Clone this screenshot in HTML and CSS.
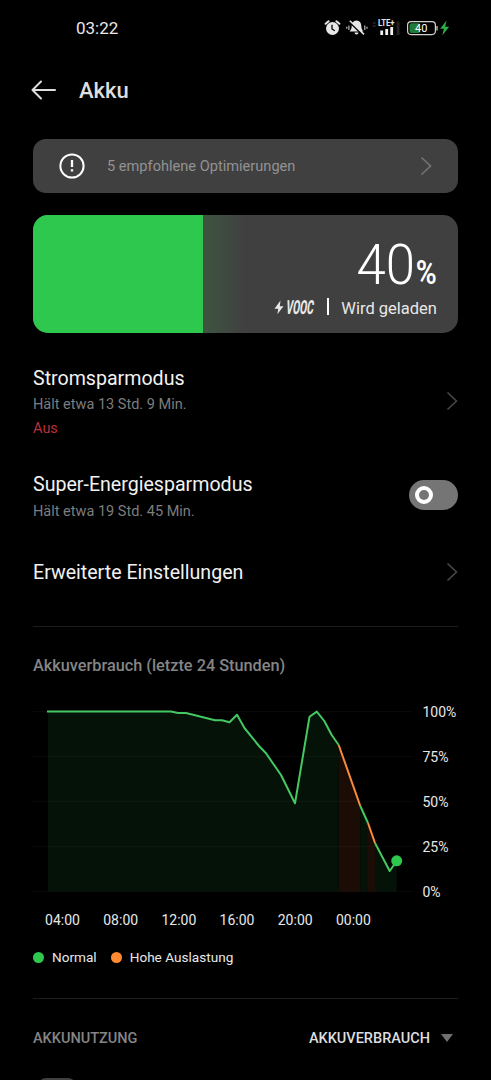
FILE: index.html
```
<!DOCTYPE html>
<html lang="de">
<head>
    <meta charset="UTF-8">
    <meta name="viewport" content="width=device-width, initial-scale=1.0">
    <title>Akku</title>
    <link rel="stylesheet" href="styles.css">
</head>
<body>

    <!-- Status Bar -->
    <div class="status-bar">
        <span class="clock">03:22</span>
        <svg class="status-icons" width="130" height="20" viewBox="0 0 130 20">
            <!-- Alarm -->
            <circle cx="12.5" cy="10.5" r="6.5" fill="#e6e6e6"/>
            <path d="M5.6 5.800L8.600 3.200M19.400 5.800L16.400 3.200" stroke="#e6e6e6" stroke-width="2" stroke-linecap="round"/>
            <path d="M12 6.800V11L14.800 12.800" stroke="#000" stroke-width="1.300" fill="none"/>
            <!-- Muted bell -->
            <path d="M36.500 2.500c-3.400 0.400-4.800 2.600-4.800 5.400 0 3-1 4-2.200 5.600h14c-1.200-1.600-2.200-2.600-2.200-5.600 0-2.800-1.400-5-4.800-5.400zM34.500 14.500h4a2 1.900 0 0 1-4 0z" fill="#e6e6e6"/>
            <path d="M30 4.400L43 17" stroke="#000" stroke-width="2"/>
            <path d="M29.800 2.800L44 16.400" stroke="#e6e6e6" stroke-width="1.500"/>
            <path d="M28.900 7.500v4.500M26.800 8.800v2M44.800 7.500v4.500M47 8.800v2" stroke="#c8c8c8" stroke-width="1.100"/>
            <!-- Mobile signal -->
            <path d="M53 5h2.500M53 8h2.500" stroke="#444" stroke-width="1.200"/>
            <text class="lte" x="58" y="8" textLength="16.500" lengthAdjust="spacingAndGlyphs">LTE+</text>
            <path d="M61.700 12.500v4.500M66.700 11v6M71.700 9v8" stroke="#f0f0f0" stroke-width="2.800"/>
            <path d="M78 3.500v13.500" stroke="#222" stroke-width="3"/>
            <!-- Battery -->
            <rect x="87.600" y="3.600" width="27.800" height="13" rx="3.500" fill="none" stroke="#d0d0d0" stroke-width="1.200"/>
            <path d="M91.500 5.300h8v9.600h-8a2 2 0 0 1-2-2v-5.600a2 2 0 0 1 2-2z" fill="#1e7c39"/>
            <path d="M117 8v4.500" stroke="#bbb" stroke-width="1.400"/>
            <text class="battery-level" x="101.300" y="14.100" text-anchor="middle">40</text>
            <path d="M126.500 2.600l-6.300 8.200h3.700l-1.600 6.800 6.800-8.800h-3.900z" fill="#2cb04a"/>
        </svg>
    </div>

    <!-- Page Header -->
    <header>
        <svg class="back-arrow" width="26" height="20" viewBox="0 0 26 20">
            <path d="M10 1.500L1.500 10L10 18.500M1.500 10H24" fill="none" stroke="#dedede" stroke-width="2" stroke-linecap="round" stroke-linejoin="round"/>
        </svg>
        <h1>Akku</h1>
    </header>

    <!-- Recommendation Banner -->
    <div class="tips">
        <svg width="26" height="26" viewBox="0 0 26 26">
            <circle cx="13" cy="13" r="11.600" fill="none" stroke="#fff" stroke-width="2"/>
            <path d="M13 7v7M13 16.200v2.400" stroke="#fff" stroke-width="2.300"/>
        </svg>
        <span class="tips-text">5 empfohlene Optimierungen</span>
        <svg class="chevron" width="12" height="20" viewBox="0 0 12 20">
            <path d="M1.500 1.500L10.500 10L1.500 18.500" fill="none" stroke="#747474" stroke-width="1.600"/>
        </svg>
    </div>

    <!-- Battery Card -->
    <div class="battery-card">
        <div class="battery-fill"></div>
        <div class="battery-glow"></div>
        <div class="battery-info">
            <svg class="percent" width="90" height="70" viewBox="-6 -4 90 70">
                <text class="percent-value" x="1.500" y="49" textLength="58.500" lengthAdjust="spacingAndGlyphs">40</text>
                <text class="percent-sign" x="60.800" y="48.500" textLength="21" lengthAdjust="spacingAndGlyphs">%</text>
            </svg>
            <div class="charging">
                <svg class="vooc-logo" width="52" height="30" viewBox="0 -3 52 30">
                    <path d="M7.500 4.500L1.500 12.800h3.800L4.300 18.300L10.500 10.300H6.800z" fill="#e8e8e8"/>
                    <text class="vooc" transform="translate(12.500 18.300) skewX(-8)" textLength="27.500" lengthAdjust="spacingAndGlyphs">VOOC</text>
                </svg>
                <span class="separator"></span>
                <span class="charging-text">Wird geladen</span>
            </div>
        </div>
    </div>

    <!-- Settings -->
    <div class="setting setting-saver">
        <div>
            <h2>Stromsparmodus</h2>
            <p>Hält etwa 13 Std. 9 Min.</p>
            <p class="state">Aus</p>
        </div>
        <svg class="chevron" width="12" height="20" viewBox="0 0 12 20">
            <path d="M1.500 1.500L10.500 10L1.500 18.500" fill="none" stroke="#484848" stroke-width="1.600"/>
        </svg>
    </div>
    <div class="setting setting-super">
        <div>
            <h2>Super-Energiesparmodus</h2>
            <p>Hält etwa 19 Std. 45 Min.</p>
        </div>
        <div class="switch"><span class="knob"></span></div>
    </div>
    <div class="setting setting-more">
        <h2>Erweiterte Einstellungen</h2>
        <svg class="chevron" width="12" height="20" viewBox="0 0 12 20">
            <path d="M1.500 1.500L10.500 10L1.500 18.500" fill="none" stroke="#484848" stroke-width="1.600"/>
        </svg>
    </div>

    <!-- Usage Chart -->
    <section class="usage">
        <h3>Akkuverbrauch (letzte 24 Stunden)</h3>
        <svg class="chart" width="430" height="240" viewBox="33 690 430 240">
            <path class="area" d="M48 711.500H171L178 713H186L215 720.300H222L229.500 722.300L237 714.700L244.500 728L259 746L266 753.300L281 775L295 803.300L309.500 716.800L316.800 711.600L324.300 721L331.700 735L338.700 745V891.500H48z"/>
            <path class="area area-high" d="M338.700 745L360.300 806V891.500H338.700z"/>
            <path class="area" d="M360.300 806L368 823V891.500H360.300z"/>
            <path class="area area-high" d="M368 823L375 843V891.500H368z"/>
            <path class="area" d="M375 843L389.700 871L396.700 861V891.500H375z"/>
            <path class="grid" d="M33 711.500H413M33 756.500H413M33 801.500H413M33 846.500H413M33 891.500H413"/>
            <path class="line" d="M47 711.500H171L178 713H186L215 720.300H222L229.500 722.300L237 714.700L244.500 728L259 746L266 753.300L281 775L295 803.300L309.500 716.800L316.800 711.600L324.300 721L331.700 735L338.700 745"/>
            <path class="line line-high" d="M338.700 745L360.300 806"/>
            <path class="line" d="M360.300 806L368 823"/>
            <path class="line line-high" d="M368 823L375 843"/>
            <path class="line" d="M375 843L389.700 871L396.700 861"/>
            <circle cx="396.700" cy="860.800" r="5.500" fill="#2fc84f"/>
            <g class="axis">
                <text x="422.500" y="717">100%</text>
                <text x="422.500" y="762">75%</text>
                <text x="422.500" y="807">50%</text>
                <text x="422.500" y="852">25%</text>
                <text x="422.500" y="897">0%</text>
            </g>
            <g class="axis axis-time">
                <text x="62.500" y="925">04:00</text>
                <text x="120.700" y="925">08:00</text>
                <text x="178.900" y="925">12:00</text>
                <text x="237" y="925">16:00</text>
                <text x="295.200" y="925">20:00</text>
                <text x="353.400" y="925">00:00</text>
            </g>
        </svg>
        <div class="legend">
            <span class="dot"></span>
            <span class="legend-normal">Normal</span>
            <span class="dot dot-high"></span>
            <span>Hohe Auslastung</span>
        </div>
    </section>

    <!-- App Usage -->
    <section class="apps">
        <div class="apps-header">
            <span class="apps-title">AKKUNUTZUNG</span>
            <span class="apps-sort">AKKUVERBRAUCH</span>
            <span class="caret"></span>
        </div>
        <div class="app-icon"></div>
    </section>

</body>
</html>
```
FILE: styles.css
```
/* General Styles */
* {
    margin: 0;
    padding: 0;
    box-sizing: border-box;
    font-family: Roboto, Arial, sans-serif;
}
body {
    background-color: #000;
    color: #f2f2f2;
    height: 1080px;
    padding: 0 33px;
    overflow: hidden;
}
svg {
    display: block;
    flex-shrink: 0;
    overflow: visible;
}
h1, h2, h3 {
    white-space: nowrap;
}

/* Status Bar */
.status-bar {
    display: flex;
    align-items: center;
    justify-content: space-between;
    height: 56px;
    padding-left: 43px;
    margin-right: 8px;
}
.clock {
    font-size: 17px;
    font-weight: 450;
    color: #e8e8e8;
}
.lte {
    font-size: 8.5px;
    font-weight: 700;
    fill: #e6e6e6;
}
.battery-level {
    font-size: 11px;
    font-weight: 400;
    fill: #fff;
}

/* Header */
header {
    display: flex;
    align-items: center;
    height: 68px;
    margin-left: -2px;
}
h1 {
    margin-left: 22px;
    font-size: 22px;
    font-weight: 500;
    color: #dedede;
}

/* Recommendation Banner */
.tips {
    display: flex;
    align-items: center;
    height: 54px;
    margin-top: 15px;
    padding: 0 26px;
    border-radius: 13px;
    background-color: #404040;
}
.tips-text {
    flex: 1;
    margin-left: 22px;
    font-size: 14.6px;
    color: #929292;
}

/* Battery Card */
.battery-card {
    display: flex;
    height: 118px;
    margin-top: 22px;
    border-radius: 15px;
    background-color: #404040;
    overflow: hidden;
}
.battery-fill {
    width: 40%;
    background-color: #2fc84f;
}
.battery-glow {
    width: 42px;
    background: linear-gradient(to right, #3e5541, #404040);
}
.battery-info {
    display: flex;
    flex: 1;
    flex-direction: column;
    align-items: flex-end;
    padding: 16px 21px 0 0;
}
.percent {
    margin-right: -2px;
}
.percent-value {
    font-size: 55px;
    font-weight: 300;
    fill: #fff;
}
.percent-sign {
    font-size: 33px;
    font-weight: 600;
    fill: #fff;
}
.charging {
    display: flex;
    align-items: center;
    height: 20px;
    margin-top: -3px;
}
.vooc-logo {
    margin-right: -6px;
}
.vooc {
    font-size: 19.5px;
    font-weight: 800;
    fill: #e8e8e8;
}
.separator {
    width: 2px;
    height: 17px;
    margin: 0 12px 3px 8px;
    background-color: #fff;
}
.charging-text {
    font-size: 16.5px;
    color: #e8e8e8;
    white-space: nowrap;
}

/* Settings */
.setting {
    display: flex;
    align-items: center;
    justify-content: space-between;
}
.setting h2 {
    font-size: 19.6px;
    font-weight: 400;
    line-height: 28px;
}
.setting p {
    font-size: 14.5px;
    line-height: 24px;
    color: #7d7d7d;
}
.setting .state {
    color: #b8303f;
}
.setting-saver {
    height: 76px;
    margin-top: 32px;
}
.setting-saver .chevron {
    margin-bottom: 5px;
}
.setting-super {
    height: 54px;
    margin-top: 30px;
}
.setting-super p {
    line-height: 26px;
}
.setting-more {
    height: 28px;
    margin-top: 34px;
}
.setting-more .chevron {
    margin-bottom: 2px;
}
.switch {
    width: 49px;
    height: 30px;
    padding: 6px;
    border-radius: 15px;
    margin-bottom: 6px;
    background-color: #757575;
}
.knob {
    display: block;
    width: 18px;
    height: 18px;
    border: 4px solid #fff;
    border-radius: 50%;
}

/* Usage Chart */
.usage {
    margin-top: 39px;
    border-top: 1px solid #1c1c1c;
    padding-top: 27px;
}
.usage h3 {
    height: 24px;
    font-size: 16.3px;
    font-weight: 500;
    line-height: 24px;
    color: #858585;
}
.chart {
    margin-top: 12px;
    margin-right: -5px;
}
.area {
    fill: #041208;
}
.area-high {
    fill: #1b0d05;
}
.grid {
    fill: none;
    stroke: #fff;
    stroke-opacity: 0.03;
}
.line {
    fill: none;
    stroke: #45c862;
    stroke-width: 2;
    stroke-linejoin: round;
}
.line-high {
    stroke: #f98b3c;
}
.axis text {
    font-size: 14px;
    fill: #e8e8e8;
}
.axis-time {
    text-anchor: middle;
}
.legend {
    display: flex;
    align-items: center;
    height: 20px;
    margin-top: 17px;
    font-size: 13.6px;
    color: #e8e8e8;
}
.dot {
    width: 11px;
    height: 11px;
    margin-right: 8px;
    border-radius: 50%;
    background-color: #2fc84f;
}
.dot-high {
    background-color: #ff8a30;
}
.legend-normal {
    margin-right: 14px;
}

/* App Usage */
.apps {
    margin-top: 31px;
    border-top: 1px solid #1c1c1c;
}
.apps-header {
    display: flex;
    align-items: center;
    height: 79px;
    padding-right: 5px;
    font-size: 14.5px;
    font-weight: 500;
}
.apps-title {
    flex: 1;
    color: #858585;
}
.apps-sort {
    color: #dedede;
}
.caret {
    margin: 0 0 2px 11px;
    border-left: 6px solid transparent;
    border-right: 6px solid transparent;
    border-top: 8px solid #707070;
}
.app-icon {
    width: 38px;
    height: 38px;
    margin-left: 5px;
    border-radius: 8px;
    background-color: #404040;
}
```
